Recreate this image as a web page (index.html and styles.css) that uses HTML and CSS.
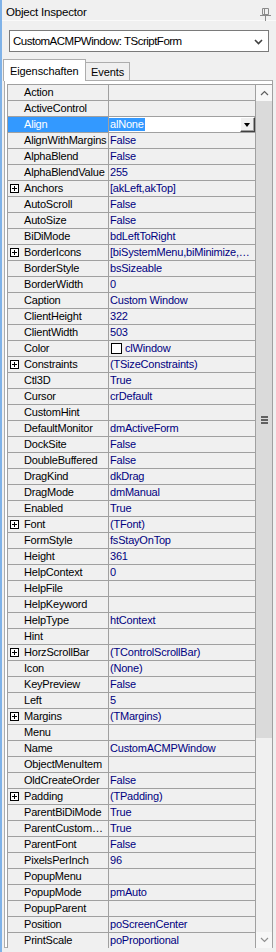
FILE: index.html
```html
<!DOCTYPE html>
<html lang="de">
<head>
  <meta charset="UTF-8">
  <title>Object Inspector</title>
  <link rel="stylesheet" href="styles.css">
</head>
<body>
  <div class="window">
    <div class="titlebar">
      <span class="title">Object Inspector</span>
      <svg class="pin" width="11" height="13" viewBox="0 0 11 13">
        <path d="M2.5 0.5h6v6h-6z M4.5 0.5v6" fill="none" stroke="#8a8a8a"/>
        <path d="M0 7.5h11 M5.5 8v5" fill="none" stroke="#8a8a8a"/>
      </svg>
    </div>

    <div class="combo">
      <span>CustomACMPWindow: TScriptForm</span>
      <svg class="chevron" width="9" height="6" viewBox="0 0 9 6">
        <path d="M1 1l3.5 3.5L8 1" fill="none" stroke="#404040" stroke-width="1.6"/>
      </svg>
    </div>

    <div class="tabs">
      <div class="tab active">Eigenschaften</div>
      <div class="tab">Events</div>
    </div>

    <div class="panel">
      <div class="grid">
        <div class="rows">
          <div class="row"><div class="name">Action</div><div class="val"></div></div>
          <div class="row"><div class="name">ActiveControl</div><div class="val"></div></div>
          <div class="row selected">
            <div class="name">Align</div>
            <div class="val editor">
              <span class="sel-text">alNone</span>
              <span class="drop-btn"></span>
            </div>
          </div>
          <div class="row"><div class="name">AlignWithMargins</div><div class="val">False</div></div>
          <div class="row"><div class="name">AlphaBlend</div><div class="val">False</div></div>
          <div class="row"><div class="name">AlphaBlendValue</div><div class="val">255</div></div>
          <div class="row"><div class="name"><span class="plus"></span>Anchors</div><div class="val">[akLeft,akTop]</div></div>
          <div class="row"><div class="name">AutoScroll</div><div class="val">False</div></div>
          <div class="row"><div class="name">AutoSize</div><div class="val">False</div></div>
          <div class="row"><div class="name">BiDiMode</div><div class="val">bdLeftToRight</div></div>
          <div class="row"><div class="name"><span class="plus"></span>BorderIcons</div><div class="val">[biSystemMenu,biMinimize,…</div></div>
          <div class="row"><div class="name">BorderStyle</div><div class="val">bsSizeable</div></div>
          <div class="row"><div class="name">BorderWidth</div><div class="val">0</div></div>
          <div class="row"><div class="name">Caption</div><div class="val">Custom Window</div></div>
          <div class="row"><div class="name">ClientHeight</div><div class="val">322</div></div>
          <div class="row"><div class="name">ClientWidth</div><div class="val">503</div></div>
          <div class="row"><div class="name">Color</div><div class="val"><span class="swatch"></span>clWindow</div></div>
          <div class="row"><div class="name"><span class="plus"></span>Constraints</div><div class="val">(TSizeConstraints)</div></div>
          <div class="row"><div class="name">Ctl3D</div><div class="val">True</div></div>
          <div class="row"><div class="name">Cursor</div><div class="val">crDefault</div></div>
          <div class="row"><div class="name">CustomHint</div><div class="val"></div></div>
          <div class="row"><div class="name">DefaultMonitor</div><div class="val">dmActiveForm</div></div>
          <div class="row"><div class="name">DockSite</div><div class="val">False</div></div>
          <div class="row"><div class="name">DoubleBuffered</div><div class="val">False</div></div>
          <div class="row"><div class="name">DragKind</div><div class="val">dkDrag</div></div>
          <div class="row"><div class="name">DragMode</div><div class="val">dmManual</div></div>
          <div class="row"><div class="name">Enabled</div><div class="val">True</div></div>
          <div class="row"><div class="name"><span class="plus"></span>Font</div><div class="val">(TFont)</div></div>
          <div class="row"><div class="name">FormStyle</div><div class="val">fsStayOnTop</div></div>
          <div class="row"><div class="name">Height</div><div class="val">361</div></div>
          <div class="row"><div class="name">HelpContext</div><div class="val">0</div></div>
          <div class="row"><div class="name">HelpFile</div><div class="val"></div></div>
          <div class="row"><div class="name">HelpKeyword</div><div class="val"></div></div>
          <div class="row"><div class="name">HelpType</div><div class="val">htContext</div></div>
          <div class="row"><div class="name">Hint</div><div class="val"></div></div>
          <div class="row"><div class="name"><span class="plus"></span>HorzScrollBar</div><div class="val">(TControlScrollBar)</div></div>
          <div class="row"><div class="name">Icon</div><div class="val">(None)</div></div>
          <div class="row"><div class="name">KeyPreview</div><div class="val">False</div></div>
          <div class="row"><div class="name">Left</div><div class="val">5</div></div>
          <div class="row"><div class="name"><span class="plus"></span>Margins</div><div class="val">(TMargins)</div></div>
          <div class="row"><div class="name">Menu</div><div class="val"></div></div>
          <div class="row"><div class="name">Name</div><div class="val">CustomACMPWindow</div></div>
          <div class="row"><div class="name">ObjectMenuItem</div><div class="val"></div></div>
          <div class="row"><div class="name">OldCreateOrder</div><div class="val">False</div></div>
          <div class="row"><div class="name"><span class="plus"></span>Padding</div><div class="val">(TPadding)</div></div>
          <div class="row"><div class="name">ParentBiDiMode</div><div class="val">True</div></div>
          <div class="row"><div class="name">ParentCustom…</div><div class="val">True</div></div>
          <div class="row"><div class="name">ParentFont</div><div class="val">False</div></div>
          <div class="row"><div class="name">PixelsPerInch</div><div class="val">96</div></div>
          <div class="row"><div class="name">PopupMenu</div><div class="val"></div></div>
          <div class="row"><div class="name">PopupMode</div><div class="val">pmAuto</div></div>
          <div class="row"><div class="name">PopupParent</div><div class="val"></div></div>
          <div class="row"><div class="name">Position</div><div class="val">poScreenCenter</div></div>
          <div class="row"><div class="name">PrintScale</div><div class="val">poProportional</div></div>
        </div>

        <div class="vscroll">
          <div class="sb-btn">
            <svg width="9" height="6" viewBox="0 0 9 6"><path d="M1 5l3.5-3.5L8 5" fill="none" stroke="#606060" stroke-width="1.2"/></svg>
          </div>
          <div class="sb-thumb"><span class="grip"></span></div>
          <div class="sb-track"></div>
          <div class="sb-btn">
            <svg width="9" height="6" viewBox="0 0 9 6"><path d="M1 1l3.5 3.5L8 1" fill="none" stroke="#909090" stroke-width="1.2"/></svg>
          </div>
        </div>
      </div>
    </div>
  </div>
</body>
</html>
```

FILE: styles.css
```css
body {
  margin: 0;
  background-color: #f0f0f0;
  font-family: 'Liberation Sans', Arial, sans-serif;
  font-size: 11px;
  color: #000;
}
.window {
  width: 276px;
  height: 952px;
  box-sizing: border-box;
  border-left: 2px solid #7fb2e8;
  display: flex;
  flex-direction: column;
  overflow: hidden;
}
.titlebar {
  height: 21px;
  flex: none;
  display: flex;
  align-items: center;
  justify-content: space-between;
  padding: 3px 5px 0 4px;
  border-bottom: 1px solid #fafafa;
  box-sizing: border-box;
}
.title {
  font-size: 11.5px;
  letter-spacing: -0.2px;
}
.pin {
  margin-top: 6px;
}
.combo {
  flex: none;
  margin: 9px 0 0 7px;
  width: 260px;
  height: 22px;
  box-sizing: border-box;
  border: 1px solid #7a7a7a;
  background: #fff;
  display: flex;
  align-items: center;
  justify-content: space-between;
  padding: 0 5px 0 3px;
  font-size: 11.5px;
  letter-spacing: -0.5px;
}
.chevron {
  margin-top: 1px;
}
.tabs {
  flex: none;
  margin-top: 7px;
  height: 22px;
  display: flex;
  align-items: flex-end;
  padding-left: 1px;
  margin-bottom: -1px;
}
.tab {
  height: 19px;
  box-sizing: border-box;
  border: 1px solid #adadad;
  border-bottom: none;
  background: #f0f0f0;
  padding: 3px 5px 0 5px;
  margin-left: -1px;
  letter-spacing: -0.1px;
}
.tab.active {
  height: 22px;
  width: 83px;
  margin-left: 0;
  background: #fff;
  padding: 5px 0 0 6px;
  position: relative;
  z-index: 1;
}
.panel {
  flex: none;
  margin-left: 2px;
  width: 269px;
  height: 868px;
  box-sizing: border-box;
  border: 1px solid #adadad;
  border-right-color: #a0a0a0;
  background: #fff;
  padding: 3px 0 0 2px;
}
.grid {
  height: 863px;
  border-top: 1px solid #a0a0a0;
  border-left: 1px solid #a0a0a0;
  display: flex;
  overflow: hidden;
}
.rows {
  width: 247px;
  flex: none;
}
.row {
  height: 16px;
  box-sizing: border-box;
  border-bottom: 1px solid #a0a0a0;
  display: flex;
  background: #f0f0f0;
  letter-spacing: -0.2px;
}
.name {
  width: 101px;
  flex: none;
  box-sizing: border-box;
  border-right: 1px solid #a0a0a0;
  padding-left: 16px;
  line-height: 15px;
  white-space: nowrap;
  overflow: hidden;
  display: flex;
  align-items: center;
}
.val {
  flex: 1;
  padding-left: 1px;
  line-height: 15px;
  color: #000080;
  white-space: nowrap;
  overflow: hidden;
  display: flex;
  align-items: center;
}
.plus {
  width: 9px;
  height: 9px;
  box-sizing: border-box;
  border: 1px solid #000;
  background: #fff;
  margin-left: -14px;
  margin-right: 5px;
  flex: none;
  background-image: linear-gradient(#000, #000), linear-gradient(#000, #000);
  background-size: 5px 1px, 1px 5px;
  background-position: center, center;
  background-repeat: no-repeat;
}
.swatch {
  width: 11px;
  height: 11px;
  box-sizing: border-box;
  border: 1px solid #000;
  background: #fff;
  margin: 0 3px 0 1px;
  flex: none;
}
.selected .name {
  background: #3399ff;
  color: #fff;
}
.val.editor {
  background: #fff;
  padding-left: 0;
  justify-content: space-between;
}
.sel-text {
  background: #3399ff;
  color: #fff;
  line-height: 13px;
  padding: 0 1px;
}
.drop-btn {
  width: 15px;
  height: 15px;
  box-sizing: border-box;
  background: #f0f0f0;
  border: 1px solid;
  border-color: #fff #404040 #404040 #fff;
  box-shadow: inset -1px -1px 0 #a0a0a0;
  display: flex;
  align-items: center;
  justify-content: center;
}
.drop-btn::after {
  content: '';
  border-left: 3.5px solid transparent;
  border-right: 3.5px solid transparent;
  border-top: 4px solid #000;
  margin: 1px 1px 0 0;
}
.vscroll {
  width: 17px;
  flex: none;
  box-sizing: border-box;
  border-left: 1px solid #a0a0a0;
  display: flex;
  flex-direction: column;
  background: #f0f0f0;
}
.sb-btn {
  height: 16px;
  flex: none;
  background: #f7f7f7;
  display: flex;
  align-items: center;
  justify-content: center;
}
.sb-thumb {
  height: 637px;
  flex: none;
  background: #dadada;
  display: flex;
  align-items: center;
  justify-content: center;
}
.grip {
  width: 7px;
  height: 8px;
  background: repeating-linear-gradient(#606060 0 2px, transparent 2px 3px);
}
.sb-track {
  flex: 1;
  background: #f0f0f0;
}
```
